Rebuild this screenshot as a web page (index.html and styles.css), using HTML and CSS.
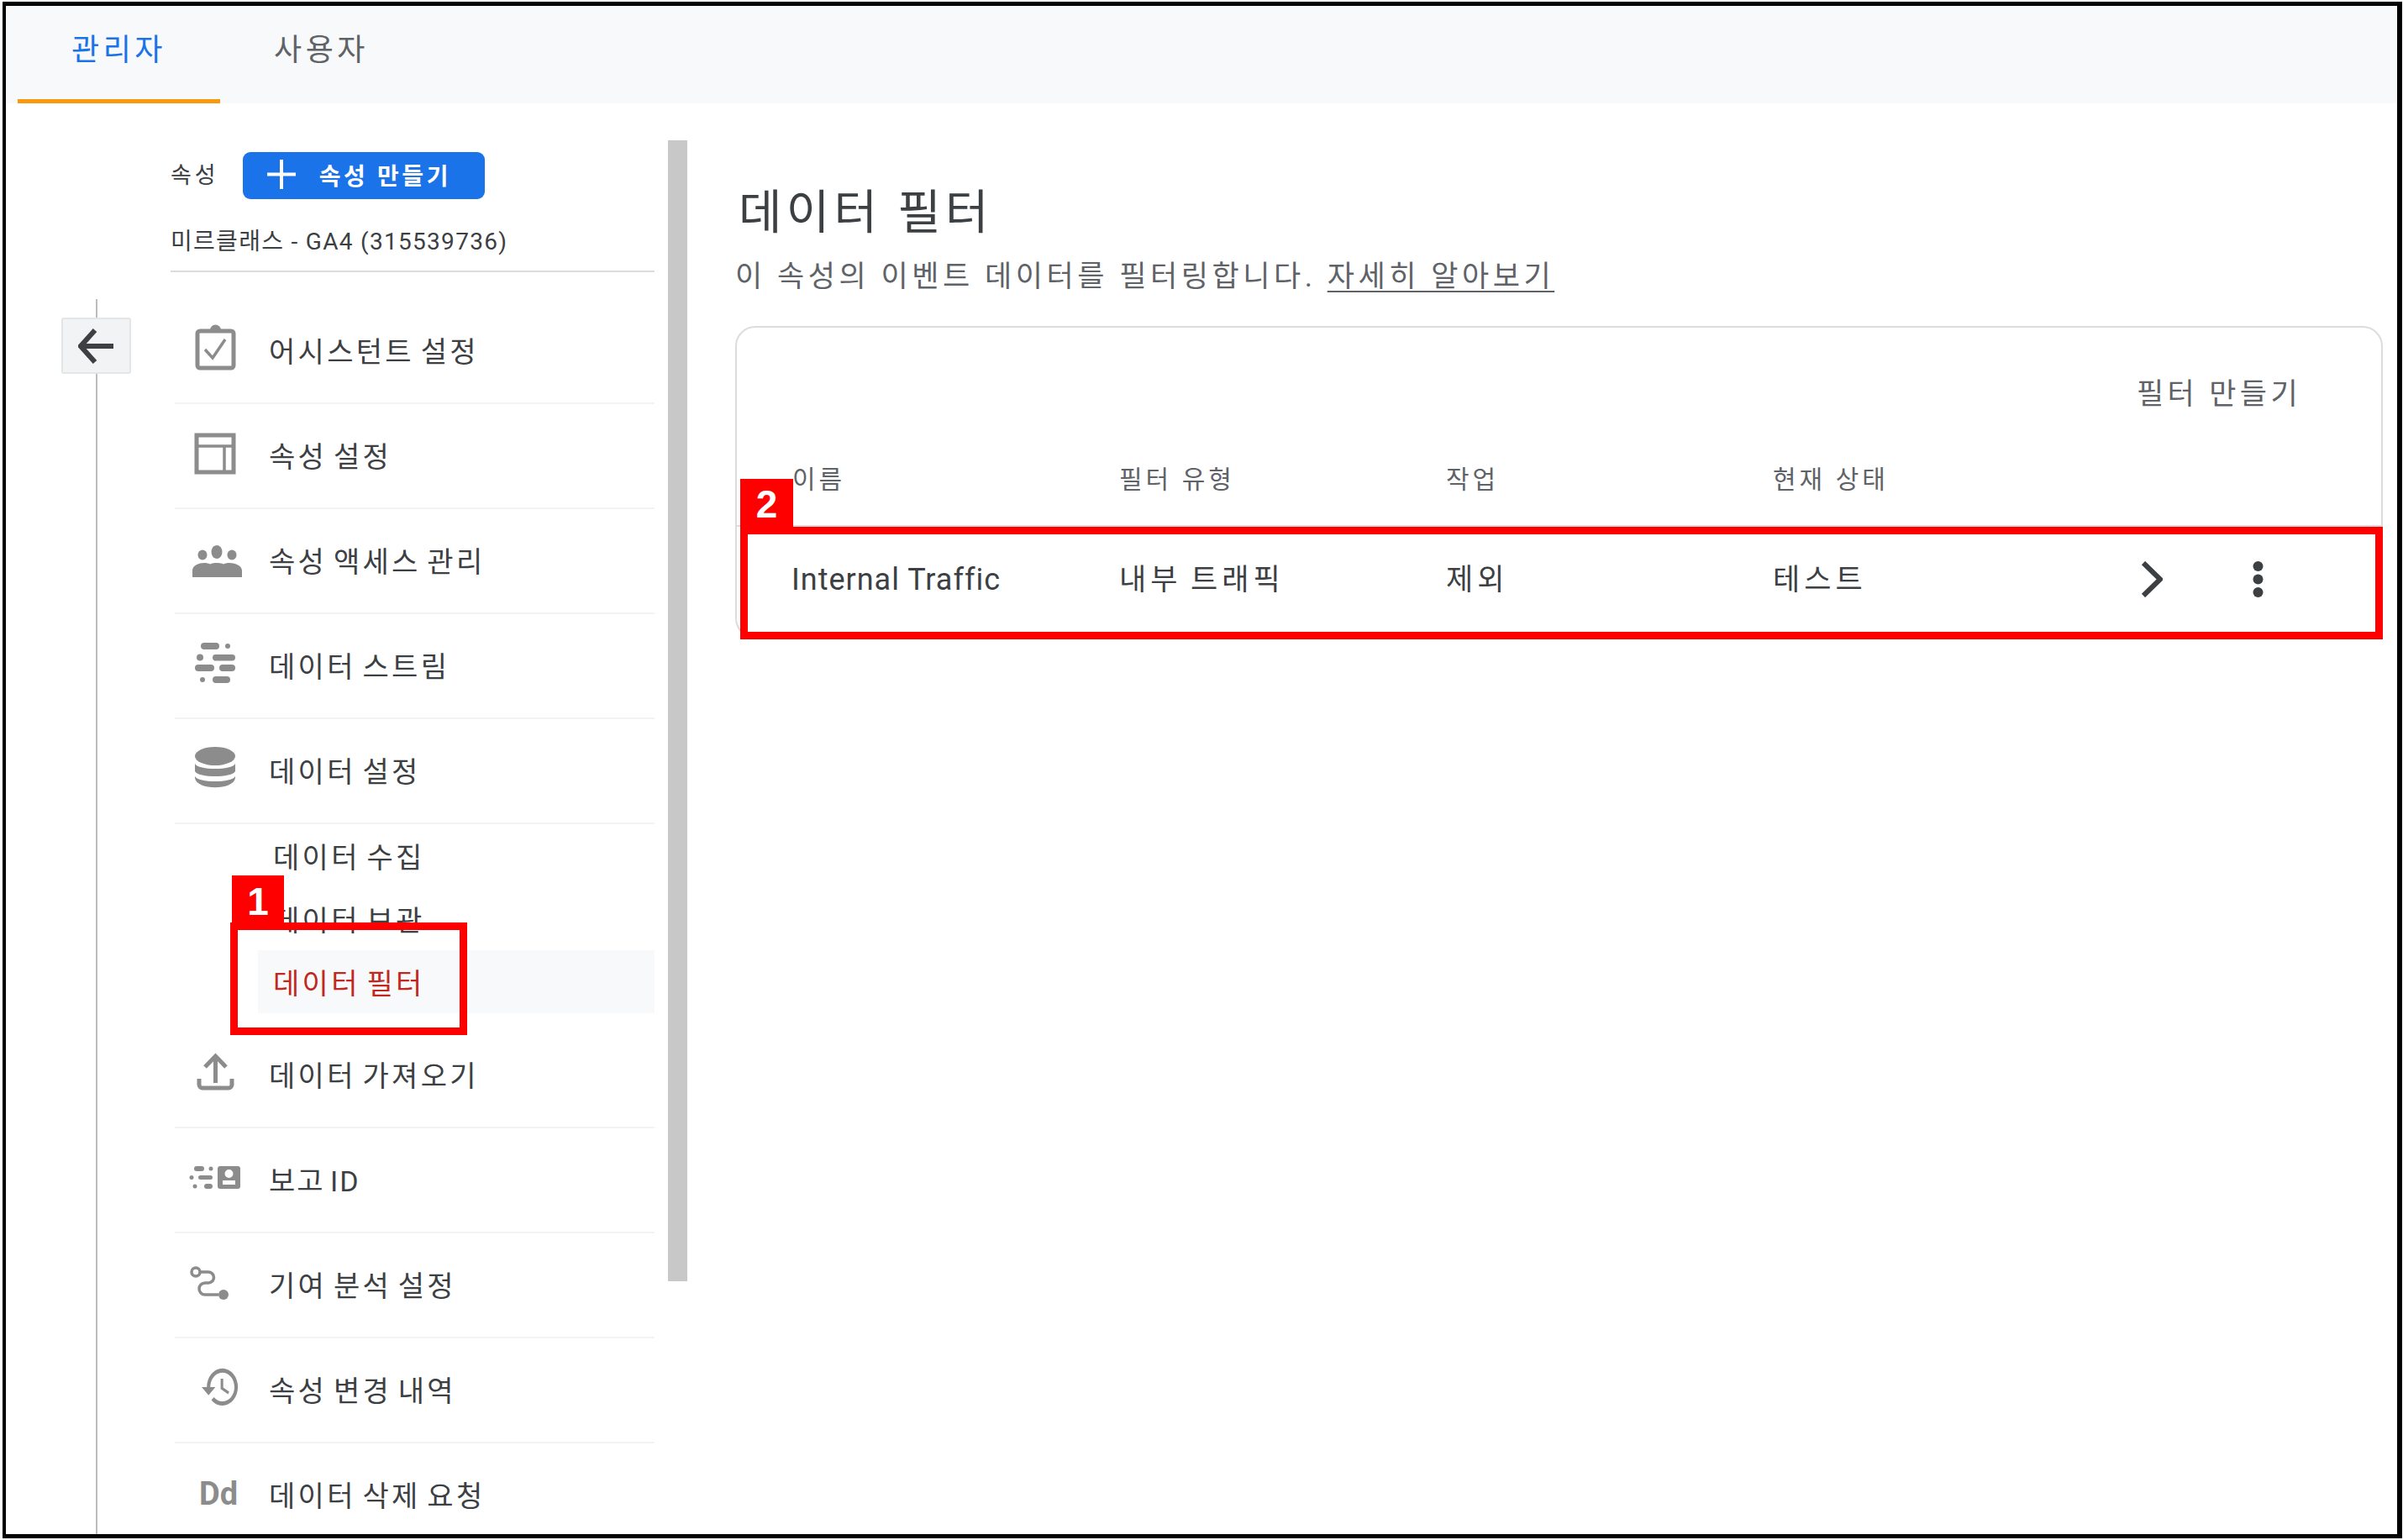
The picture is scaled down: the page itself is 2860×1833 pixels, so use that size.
FILE: index.html
```html
<!DOCTYPE html>
<html lang="ko">
<head>
<meta charset="utf-8">
<title>데이터 필터</title>
<link rel="stylesheet" href="styles.css">
</head>
<body>
<div class="frame">
  <nav class="tabs">
    <a class="tab tab-active">관리자</a>
    <a class="tab">사용자</a>
  </nav>
  <div class="main">
    <div class="rail">
      <div class="rail-track">
        <span class="rail-line rail-line-top"></span>
        <button class="back" aria-label="뒤로">
          <svg width="43" height="42" viewBox="0 0 43 42"><path class="ic-arrow" d="M42 21H4M20 2 3 21l17 19"/></svg>
        </button>
        <span class="rail-line rail-line-rest"></span>
      </div>
    </div>
    <aside class="sidebar">
      <div class="side-head">
        <span class="side-label">속성</span>
        <button class="create-btn">
          <svg width="34" height="35" viewBox="0 0 34 35"><path class="ic-plus" d="M17 0v35M0 17.500h34"/></svg>
          <span>속성 만들기</span>
        </button>
      </div>
      <div class="account">미르클래스 - GA4 (315539736)</div>
      <ul class="menu">
        <li class="row row-first">
          <svg class="ic" viewBox="0 0 64 56"><rect class="ln" x="11" y="6" width="43" height="44" rx="3"/><path class="fl" d="M26 5a6.500 6.500 0 0 1 13 0v2H26z"/><path class="ln-thin" d="m20 28 9 10 15-22"/></svg>
          <span class="row-text">어시스턴트 설정</span>
        </li>
        <li class="row">
          <svg class="ic" viewBox="0 0 64 56"><rect class="ln" x="10" y="5" width="44" height="44"/><path class="ln-thin" d="M10 18h44M43 18v31"/></svg>
          <span class="row-text">속성 설정</span>
        </li>
        <li class="row">
          <svg class="ic" viewBox="0 0 64 56"><ellipse class="fl" cx="17" cy="22.500" rx="5.500" ry="6"/><ellipse class="fl" cx="34" cy="19" rx="6.500" ry="8"/><ellipse class="fl" cx="52" cy="22.500" rx="5.500" ry="6"/><path class="fl" d="M5 49v-8c0-6 8-9 14-9 3 0 5 .5 7 1.500 2-1 5-1.500 8-1.500s6 .5 8 1.500c2-1 4-1.500 7-1.500 6 0 15 3 15 9v8z"/></svg>
          <span class="row-text">속성 액세스 관리</span>
        </li>
        <li class="row">
          <svg class="ic" viewBox="0 0 64 56"><rect class="fl" x="15" y="2" width="22" height="8" rx="4"/><circle class="fl" cx="47" cy="6" r="3"/><circle class="fl" cx="14" cy="19.500" r="4"/><rect class="fl" x="29" y="16" width="27" height="7.500" rx="3.700"/><rect class="fl" x="8" y="28" width="23" height="8" rx="4"/><rect class="fl" x="37" y="28" width="19" height="8" rx="4"/><circle class="fl" cx="17" cy="46" r="3"/><rect class="fl" x="29" y="42" width="21" height="8" rx="4"/></svg>
          <span class="row-text">데이터 스트림</span>
        </li>
        <li class="row">
          <svg class="ic" viewBox="0 0 64 56"><ellipse class="fl" cx="32" cy="12" rx="24" ry="11"/><path class="fl" d="M8 21c4 8 44 8 48 0v9c-4 8-44 8-48 0z"/><path class="fl" d="M8 36c4 8 44 8 48 0v2c-2 15-46 15-48 0z"/></svg>
          <span class="row-text">데이터 설정</span>
        </li>
        <li class="subs">
          <a class="sub">데이터 수집</a>
          <a class="sub">데이터 보관</a>
          <a class="sub sub-active">데이터 필터</a>
        </li>
        <li class="row row-after-subs">
          <svg class="ic" viewBox="0 0 64 56"><path class="ln" d="M32.500 39V8M20 20 32.500 7 45 20M13 34v7a4 4 0 0 0 4 4h31a4 4 0 0 0 4-4v-7"/></svg>
          <span class="row-text">데이터 가져오기</span>
        </li>
        <li class="row">
          <svg class="ic" viewBox="0 0 64 56"><rect class="fl" x="7" y="13" width="12" height="6" rx="3"/><circle class="fl" cx="27" cy="16" r="2.500"/><circle class="fl" cx="4" cy="26.500" r="2.500"/><rect class="fl" x="12" y="24" width="17" height="5" rx="2.500"/><circle class="fl" cx="8" cy="37" r="2.500"/><rect class="fl" x="19" y="34" width="10" height="6" rx="3"/><path class="fl" fill-rule="evenodd" d="M38 13h21a3 3 0 0 1 3 3v21a3 3 0 0 1-3 3H38a3 3 0 0 1-3-3V16a3 3 0 0 1 3-3zm10.500 4a5 5 0 1 0 0 10 5 5 0 0 0 0-10zM41 30v5h15v-5z"/></svg>
          <span class="row-text row-text-id">보고 ID</span>
        </li>
        <li class="row">
          <svg class="ic" viewBox="0 0 64 56"><circle class="ln-thin" cx="9" cy="14" r="5"/><path class="ln-thin" d="M14 14h10a6.500 6.500 0 0 1 0 13h-4a7 7 0 0 0 0 14h16"/><circle class="fl" cx="42" cy="41" r="6"/></svg>
          <span class="row-text">기여 분석 설정</span>
        </li>
        <li class="row">
          <svg class="ic" viewBox="0 0 64 56"><path class="fl" transform="translate(14,-3.500) scale(2.050,2.450)" d="M13 3a9 9 0 0 0-9 9H1l3.890 3.890.070.140L9 12H6c0-3.870 3.130-7 7-7s7 3.130 7 7-3.130 7-7 7c-1.930 0-3.680-.790-4.940-2.060l-1.420 1.420A8.954 8.954 0 0 0 13 21a9 9 0 0 0 0-18zm-1 5v5l4.280 2.540.720-1.210-3.500-2.080V8H12z"/></svg>
          <span class="row-text">속성 변경 내역</span>
        </li>
        <li class="row">
          <span class="ic-text">Dd</span>
          <span class="row-text">데이터 삭제 요청</span>
        </li>
      </ul>
    </aside>
    <div class="scrollbar"></div>
    <section class="content">
      <h1 class="title">데이터 필터</h1>
      <p class="subtitle">이 속성의 이벤트 데이터를 필터링합니다. <a class="learn">자세히 알아보기</a></p>
      <div class="card">
        <div class="toolbar"><a class="create-filter">필터 만들기</a></div>
        <div class="grid head">
          <span>이름</span><span>필터 유형</span><span>작업</span><span>현재 상태</span>
        </div>
        <div class="grid body-row">
          <span class="latin">Internal Traffic</span><span>내부 트래픽</span><span>제외</span><span>테스트</span>
          <span class="actions">
            <svg width="26" height="43" viewBox="0 0 26 43"><path class="ic-chev" d="m3 2 20 19.500L3 41"/></svg>
            <svg width="13" height="43" viewBox="0 0 13 43"><circle class="dot" cx="6.500" cy="6" r="6"/><circle class="dot" cx="6.500" cy="21.500" r="6"/><circle class="dot" cx="6.500" cy="37" r="6"/></svg>
          </span>
        </div>
      </div>
    </section>
  </div>
  <div class="mark mark-one"></div>
  <div class="badge badge-one">1</div>
  <div class="mark mark-two"></div>
  <div class="badge badge-two">2</div>
</div>
</body>
</html>
```

FILE: styles.css
```css
* { box-sizing: border-box; }
html, body { margin: 0; padding: 0; background: #fff; }
body {
  font-family: Roboto, "Noto Sans CJK KR", "Noto Sans", sans-serif;
  color: #3c4043;
}
.frame {
  position: relative;
  width: 2856px;
  height: 1829px;
  margin: 2px 1px 2px 3px;
  border: solid #000;
  border-width: 5px 6px 5px 4px;
  background: #fff;
  overflow: hidden;
}

/* tabs */
.tabs {
  display: flex;
  height: 116px;
  padding-left: 14px;
  background: #f8f9fa;
}
.tab {
  width: 241px;
  height: 116px;
  display: flex;
  align-items: center;
  justify-content: center;
  padding-bottom: 19px;
  font-size: 36px;
  letter-spacing: 4.500px;
  color: #5f6368;
}
.tab-active {
  color: #1a73e8;
  border-bottom: 5px solid #f9990f;
  padding-bottom: 14px;
}

/* layout */
.main {
  display: flex;
  height: 1703px;
}
.rail {
  width: 196px;
  flex: none;
  padding: 233px 0 0 66px;
}
.rail-track {
  width: 83px;
  height: 100%;
  display: flex;
  flex-direction: column;
  align-items: center;
}
.rail-line { width: 2px; background: #bdbdbd; }
.rail-line-top { height: 22px; flex: none; }
.rail-line-rest { flex: 1; }
.back {
  width: 83px;
  height: 67px;
  flex: none;
  padding: 0;
  display: flex;
  align-items: center;
  justify-content: center;
  background: #f1f3f4;
  border: 2px solid #e3e5e7;
  border-radius: 3px;
}
.ic-arrow { fill: none; stroke: #3c4043; stroke-width: 6; }

/* sidebar */
.sidebar {
  width: 576px;
  flex: none;
  padding-top: 58px;
}
.side-head {
  display: flex;
  align-items: center;
  gap: 28px;
  height: 56px;
}
.side-label {
  padding-bottom: 6px;
  font-size: 27px;
  letter-spacing: 4px;
  color: #3c4043;
}
.create-btn {
  width: 288px;
  height: 56px;
  display: flex;
  align-items: center;
  gap: 28px;
  padding: 0 0 3px 29px;
  background: #1a73e8;
  border: 0;
  border-radius: 9px;
  color: #fff;
  font-family: inherit;
  font-size: 28px;
  font-weight: 700;
  letter-spacing: 3.600px;
}
.ic-plus { fill: none; stroke: #fff; stroke-width: 4; }
.account {
  height: 87px;
  padding-top: 33px;
  line-height: 36px;
  border-bottom: 2px solid #dadce0;
  font-size: 28px;
  letter-spacing: 1.300px;
  color: #3c4043;
}
.menu {
  list-style: none;
  margin: 0;
  padding: 32px 0 0 5px;
  font-size: 34px;
  letter-spacing: 3.300px;
  word-spacing: -4px;
}
.row {
  display: flex;
  align-items: center;
  height: 125px;
  padding-bottom: 3px;
  border-bottom: 2px solid #f1f3f4;
  color: #3c4043;
}
.row-after-subs { margin-top: 12px; }
.ic {
  width: 64px;
  height: 56px;
  margin-left: 16px;
  flex: none;
  overflow: visible;
}
.ic-text {
  width: 64px;
  margin-left: 16px;
  flex: none;
  padding-left: 13px;
  font-size: 38px;
  font-weight: 700;
  letter-spacing: 0;
  color: #8c8c8c;
}
.fl { fill: #8c8c8c; }
.ln { fill: none; stroke: #8c8c8c; stroke-width: 5; }
.ln-thin { fill: none; stroke: #8c8c8c; stroke-width: 3.500; }
.row-text { margin-left: 32px; }
.row-text-id { letter-spacing: 2px; }
.subs { display: block; }
.sub {
  display: flex;
  align-items: center;
  height: 75px;
  margin-left: 99px;
  padding-left: 18px;
  color: #3c4043;
}
.sub-active {
  background: #f8f9fa;
  color: #c0281f;
}

/* scrollbar */
.scrollbar {
  width: 23px;
  height: 1358px;
  flex: none;
  margin: 44px 0 0 16px;
  background: #c8c8c8;
}

/* content */
.content {
  width: 1961px;
  flex: none;
  margin-left: 57px;
}
.title {
  margin: 0;
  padding: 90px 0 0 4px;
  height: 165px;
  font-size: 56px;
  line-height: 80px;
  font-weight: 400;
  letter-spacing: 5.200px;
  color: #3c4043;
}
.subtitle {
  margin: 0;
  height: 100px;
  padding-top: 17px;
  font-size: 35px;
  line-height: 50px;
  letter-spacing: 4.550px;
  color: #5f6368;
}
.learn { text-decoration: underline; text-decoration-thickness: 2px; text-underline-offset: 5px; }
.card {
  height: 372px;
  border: 2px solid #dadce0;
  border-radius: 24px;
}
.toolbar {
  height: 156px;
  display: flex;
  align-items: center;
  justify-content: flex-end;
  padding: 0 95px 6px 0;
}
.create-filter {
  font-size: 35px;
  letter-spacing: 4.400px;
  color: #5f6368;
}
.grid {
  display: grid;
  grid-template-columns: 389px 389px 389px 1fr;
  padding-left: 66px;
  align-items: center;
}
.head {
  height: 81px;
  padding-bottom: 42px;
  border-bottom: 2px solid #dadce0;
  font-size: 30px;
  letter-spacing: 4px;
  color: #5f6368;
}
.body-row {
  position: relative;
  height: 131px;
  padding-bottom: 12px;
  font-size: 35px;
  letter-spacing: 5px;
  word-spacing: -3px;
  color: #3c4043;
}
.latin {
  font-size: 36px;
  letter-spacing: 1px;
  word-spacing: 0;
  margin-left: -1px;
  padding-top: 7px;
}
.actions {
  position: absolute;
  left: 1671px;
  top: 41px;
  display: flex;
  gap: 107px;
}
.ic-chev { fill: none; stroke: #3c4043; stroke-width: 6; }
.dot { fill: #3c4043; }

/* annotations over the screenshot */
.mark {
  position: absolute;
  border: 9px solid #f00;
}
.mark-one { left: 267px; top: 1091px; width: 282px; height: 134px; }
.mark-two { left: 874px; top: 620px; width: 1955px; height: 134px; }
.badge {
  position: absolute;
  background: #f00;
  color: #fff;
  font-family: "Liberation Sans", sans-serif;
  font-weight: 700;
  font-size: 46px;
  display: flex;
  align-items: center;
  justify-content: center;
}
.badge-one { left: 269px; top: 1035px; width: 62px; height: 56px; padding-top: 6px; }
.badge-two { left: 874px; top: 563px; width: 63px; height: 58px; padding-top: 2px; }
```
